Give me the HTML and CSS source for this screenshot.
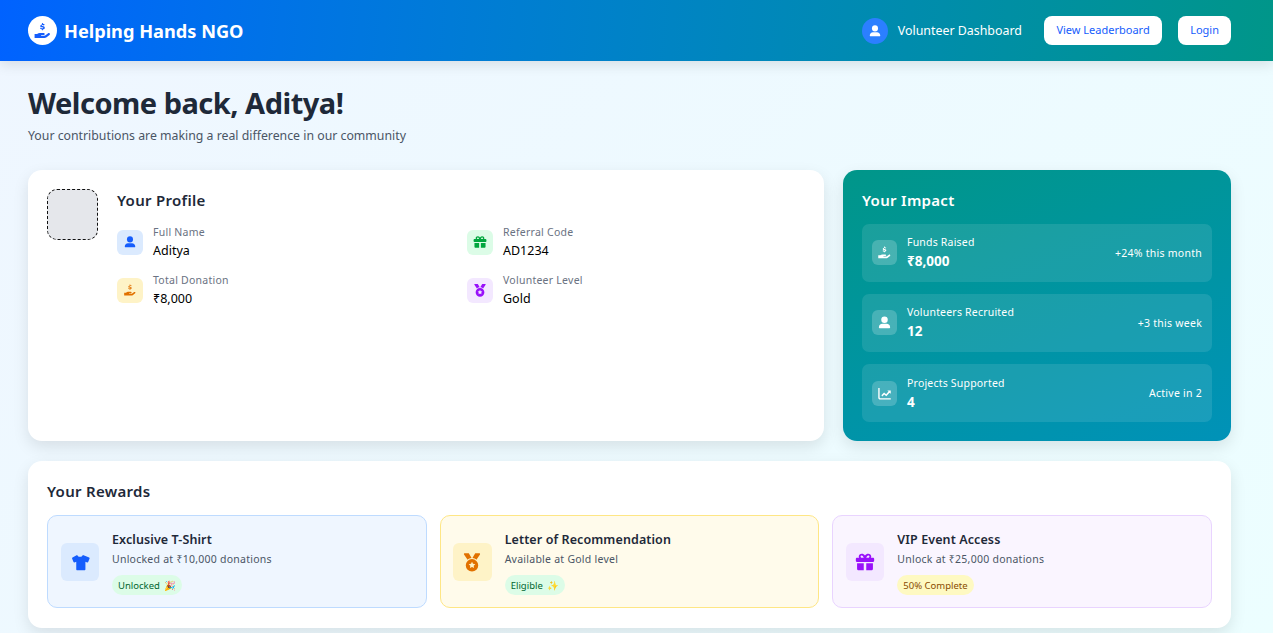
FILE: index.html
```html
<!DOCTYPE html>
<html lang="en">
<head>
    <meta charset="UTF-8">
    <meta name="viewport" content="width=device-width, initial-scale=1.0">
    <title>Helping Hands NGO</title>
    <link rel="stylesheet" href="styles.css">
</head>
<body>
    <svg class="sprite" aria-hidden="true">
        <symbol id="i-hand" viewBox="0 0 24 24">
            <path d="M2 16.500h3.200c1-.9 2.200-1.400 3.500-1.400h4.600c.9 0 1.500.6 1.500 1.300 0 .8-.6 1.300-1.500 1.300h-3v.8h4c.6 0 1.100-.2 1.500-.5l3.300-2.400c.6-.5 1.500-.4 2 .2.500.6.300 1.400-.3 1.900l-3.600 2.800c-.8.600-1.800.900-2.800.900H2z"/>
            <path d="M12.500 2.500v1c1 .1 1.800.5 2.300 1l-1 1.100c-.5-.4-1.100-.7-1.800-.7-.6 0-1 .2-1 .6 0 .4.500.6 1.300.8 1.400.3 2.600.8 2.600 2.200 0 1.200-.9 2-2.400 2.200v1h-1.200v-1c-1-.1-1.900-.5-2.500-1.100l1-1.100c.6.500 1.300.8 2 .8.700 0 1.200-.2 1.200-.7 0-.4-.5-.6-1.400-.8C10.300 8.400 9.200 7.900 9.200 6.500c0-1.100.9-1.900 2.100-2.100v-1.900z"/>
        </symbol>
        <symbol id="i-user" viewBox="0 0 24 24">
            <circle cx="12" cy="7.500" r="5.200"/>
            <path d="M8.500 14h7c3 0 5.500 2.500 5.500 5.500 0 1-.8 1.500-1.500 1.500h-15C3.800 21 3 20.500 3 19.500 3 16.500 5.500 14 8.500 14z"/>
        </symbol>
        <symbol id="i-gift" viewBox="0 0 24 24">
            <path fill-rule="evenodd" d="M8.200 2c1.500 0 2.800.8 3.800 2.300C13 2.800 14.300 2 15.800 2 17.900 2 19.500 3.500 19.500 5.300c0 .7-.2 1.200-.5 1.700h2.500c.8 0 1.500.7 1.500 1.500v2c0 .8-.7 1.500-1.500 1.500h-19C1.700 12 1 11.300 1 10.500v-2C1 7.700 1.700 7 2.500 7H5c-.3-.5-.5-1-.5-1.700C4.500 3.500 6.100 2 8.200 2zm0 2.200c-.8 0-1.500.5-1.500 1.200S7.400 7 8.200 7h2.300c-.5-1.600-1.300-2.800-2.300-2.800zm7.600 0c-1 0-1.800 1.200-2.300 2.800h2.300c.8 0 1.500-.9 1.500-1.600s-.7-1.200-1.500-1.200z"/>
            <path d="M2.500 13.500h8v8.500H4.500c-1.100 0-2-.9-2-2zM13.500 13.500h8V20c0 1.100-.9 2-2 2h-6z"/>
        </symbol>
        <symbol id="i-medal" viewBox="0 0 24 24">
            <path fill-rule="evenodd" d="M3.200 1.500h4.400c.4 0 .7.200.9.500l3 5.200c-1.900.1-3.600.9-4.800 2.100L2.400 3c-.4-.7.100-1.500.8-1.500zM20.800 1.500h-4.400c-.4 0-.7.200-.9.500l-3 5.200c1.900.1 3.600.9 4.800 2.100L21.600 3c.4-.7-.1-1.500-.8-1.500zM12 8.500a7.500 7.500 0 1 1 0 15 7.500 7.500 0 0 1 0-15zm0 3.200-1.200 2.500-2.800.4 2 1.900-.5 2.700 2.500-1.300 2.500 1.300-.5-2.700 2-1.900-2.800-.4z"/>
        </symbol>
        <symbol id="i-shirt" viewBox="0 0 24 24">
            <path d="M8.500 3.500c.8 1.500 2 2.200 3.500 2.200s2.700-.7 3.500-2.200l7.500 3c.5.200.7.700.5 1.200l-1.700 4.400c-.2.500-.7.700-1.200.5l-2.100-.8v9c0 .7-.5 1.200-1.200 1.200H8.700c-.7 0-1.200-.5-1.200-1.200v-9l-2.100.8c-.5.200-1-.1-1.200-.5L2.500 7.700c-.2-.5 0-1 .5-1.200z"/>
        </symbol>
        <symbol id="i-chart" viewBox="0 0 24 24">
            <path d="M2 3h2.200v15.300c0 .7.500 1.200 1.200 1.200H22v2.200H5c-1.700 0-3-1.300-3-3z"/>
            <path d="M7 14.800l4.300-4.500 3.300 2.700 3.800-4.200-1.900-1.800H22v5.500l-2-1.900-5.100 5.700-3.400-2.800-3 3.200z"/>
        </symbol>
    </svg>

    <header class="topbar">
        <div class="brand">
            <span class="brand-logo"><svg><use href="#i-hand"/></svg></span>
            <span class="brand-name">Helping Hands NGO</span>
        </div>
        <div class="topbar-right">
            <span class="topbar-avatar"><svg><use href="#i-user"/></svg></span>
            <span class="topbar-label">Volunteer Dashboard</span>
            <a class="btn btn-wide">View Leaderboard</a>
            <a class="btn">Login</a>
        </div>
    </header>

    <main class="page">
        <h1 class="welcome">Welcome back, Aditya!</h1>
        <p class="welcome-sub">Your contributions are making a real difference in our community</p>

        <div class="top-grid">
            <section class="card profile">
                <div class="avatar-box"></div>
                <div class="profile-body">
                    <h2 class="card-title">Your Profile</h2>
                    <div class="profile-fields">
                        <div class="field">
                            <span class="field-icon tint-blue"><svg><use href="#i-user"/></svg></span>
                            <div><div class="field-label">Full Name</div><div class="field-value">Aditya</div></div>
                        </div>
                        <div class="field">
                            <span class="field-icon tint-green"><svg><use href="#i-gift"/></svg></span>
                            <div><div class="field-label">Referral Code</div><div class="field-value">AD1234</div></div>
                        </div>
                        <div class="field">
                            <span class="field-icon tint-amber"><svg><use href="#i-hand"/></svg></span>
                            <div><div class="field-label">Total Donation</div><div class="field-value">₹8,000</div></div>
                        </div>
                        <div class="field">
                            <span class="field-icon tint-purple"><svg><use href="#i-medal"/></svg></span>
                            <div><div class="field-label">Volunteer Level</div><div class="field-value">Gold</div></div>
                        </div>
                    </div>
                </div>
            </section>

            <section class="impact">
                <h2 class="card-title impact-title">Your Impact</h2>
                <div class="stat">
                    <span class="stat-icon"><svg><use href="#i-hand"/></svg></span>
                    <div class="stat-text"><div class="stat-label">Funds Raised</div><div class="stat-value">₹8,000</div></div>
                    <span class="stat-note">+24% this month</span>
                </div>
                <div class="stat">
                    <span class="stat-icon"><svg><use href="#i-user"/></svg></span>
                    <div class="stat-text"><div class="stat-label">Volunteers Recruited</div><div class="stat-value">12</div></div>
                    <span class="stat-note">+3 this week</span>
                </div>
                <div class="stat">
                    <span class="stat-icon"><svg><use href="#i-chart"/></svg></span>
                    <div class="stat-text"><div class="stat-label">Projects Supported</div><div class="stat-value">4</div></div>
                    <span class="stat-note">Active in 2</span>
                </div>
            </section>
        </div>

        <section class="card rewards">
            <h2 class="card-title">Your Rewards</h2>
            <div class="reward-grid">
                <div class="reward reward-blue">
                    <span class="reward-icon tint-blue"><svg><use href="#i-shirt"/></svg></span>
                    <div class="reward-text">
                        <h3 class="reward-name">Exclusive T-Shirt</h3>
                        <p class="reward-desc">Unlocked at ₹10,000 donations</p>
                        <span class="pill pill-green">Unlocked <span class="pill-emoji">🎉</span></span>
                    </div>
                </div>
                <div class="reward reward-amber">
                    <span class="reward-icon tint-amber"><svg><use href="#i-medal"/></svg></span>
                    <div class="reward-text">
                        <h3 class="reward-name">Letter of Recommendation</h3>
                        <p class="reward-desc">Available at Gold level</p>
                        <span class="pill pill-green">Eligible <span class="pill-emoji">✨</span></span>
                    </div>
                </div>
                <div class="reward reward-purple">
                    <span class="reward-icon tint-purple"><svg><use href="#i-gift"/></svg></span>
                    <div class="reward-text">
                        <h3 class="reward-name">VIP Event Access</h3>
                        <p class="reward-desc">Unlock at ₹25,000 donations</p>
                        <span class="pill pill-yellow">50% Complete</span>
                    </div>
                </div>
            </div>
        </section>
    </main>
</body>
</html>
```

FILE: styles.css
```css
* {
    box-sizing: border-box;
}
html, body {
    margin: 0;
    height: 633px;
    overflow: hidden;
}
body {
    font-family: "Noto Sans", "Open Sans", sans-serif;
    color: #1e2939;
    background: linear-gradient(135deg, #eff6ff, #ecfeff);
}
h1, h2, h3, p {
    margin: 0;
}
svg {
    display: block;
    fill: currentColor;
}
.sprite {
    display: none;
}

/* header */
.topbar {
    height: 61px;
    padding: 0 42px 0 28px;
    display: flex;
    align-items: center;
    justify-content: space-between;
    background: linear-gradient(95deg in oklab, #0062ff, #009689);
    box-shadow: 0 4px 12px rgba(0, 0, 0, 0.1);
    color: #fff;
}
.brand {
    display: flex;
    align-items: center;
    gap: 7px;
}
.brand-logo {
    width: 29px;
    height: 29px;
    border-radius: 50%;
    background: #fff;
    color: #155dfc;
    display: flex;
    align-items: center;
    justify-content: center;
}
.brand-logo svg {
    width: 19px;
    height: 19px;
}
.brand-name {
    font-size: 18.2px;
    font-weight: 700;
}
.topbar-right {
    display: flex;
    align-items: center;
}
.topbar-avatar {
    width: 26px;
    height: 26px;
    border-radius: 50%;
    background: #2b7fff;
    display: flex;
    align-items: center;
    justify-content: center;
    margin-right: 10px;
}
.topbar-avatar svg {
    width: 14px;
    height: 14px;
}
.topbar-label {
    font-size: 12.4px;
    margin-right: 22px;
}
.btn {
    height: 29px;
    padding: 0 12px 2px;
    border-radius: 8px;
    background: #fff;
    color: #155dfc;
    font-size: 11px;
    display: flex;
    align-items: center;
}
.btn-wide {
    padding: 0 12.5px 2px;
    margin-right: 16px;
}

/* page */
.page {
    padding: 23px 42px 0 28px;
}
.welcome {
    font-size: 29px;
    line-height: 38px;
    font-weight: 700;
    letter-spacing: -0.5px;
}
.welcome-sub {
    margin-top: 5px;
    font-size: 12.3px;
    line-height: 18px;
    color: #4a5565;
}
.top-grid {
    margin-top: 25px;
    display: grid;
    grid-template-columns: minmax(0, 1fr) 388px;
    gap: 19px;
}
.card {
    background: #fff;
    border-radius: 14px;
    box-shadow: 0 6px 16px rgba(0, 0, 0, 0.1);
}
.card-title {
    font-size: 15px;
    line-height: 22px;
    font-weight: 600;
    letter-spacing: 0.3px;
}

/* profile */
.profile {
    height: 271px;
    padding: 19px;
    display: flex;
    gap: 19px;
    align-items: flex-start;
}
.avatar-box {
    width: 51px;
    height: 51px;
    flex: none;
    border-radius: 10px;
    border: 1px dashed #111;
    background: #e5e7eb;
}
.profile-body {
    flex: 1;
}
.profile-fields {
    margin-top: 13px;
    display: grid;
    grid-template-columns: 350px 1fr;
    row-gap: 12px;
}
.field {
    display: flex;
    align-items: center;
    gap: 10px;
}
.field-icon {
    width: 26px;
    height: 25px;
    border-radius: 6px;
    display: flex;
    align-items: center;
    justify-content: center;
}
.field-icon svg {
    width: 14px;
    height: 14px;
}
.field-label {
    font-size: 10.5px;
    line-height: 16px;
    letter-spacing: 0.25px;
    color: #6a7282;
}
.field-value {
    margin-top: 2px;
    font-size: 12.5px;
    line-height: 18px;
    color: #000;
}
.tint-blue {
    background: #dbeafe;
    color: #155dfc;
}
.tint-green {
    background: #dcfce7;
    color: #00a63e;
}
.tint-amber {
    background: #fef3c7;
    color: #e17100;
}
.tint-purple {
    background: #f3e8ff;
    color: #9810fa;
}

/* impact */
.impact {
    height: 271px;
    padding: 19px;
    border-radius: 14px;
    color: #fff;
    background: linear-gradient(160deg in oklab, #009689, #0092b8);
    box-shadow: 0 6px 16px rgba(0, 0, 0, 0.1);
}
.impact-title {
    margin-bottom: 13px;
}
.stat {
    height: 57.6px;
    margin-bottom: 12.6px;
    padding: 0 10px;
    border-radius: 7px;
    background: rgba(255, 255, 255, 0.1);
    display: flex;
    align-items: center;
    gap: 10px;
}
.stat-icon {
    width: 25px;
    height: 25px;
    flex: none;
    border-radius: 6px;
    background: rgba(255, 255, 255, 0.2);
    display: flex;
    align-items: center;
    justify-content: center;
}
.stat-icon svg {
    width: 15px;
    height: 15px;
}
.stat-text {
    flex: 1;
}
.stat-label {
    font-size: 10.5px;
    line-height: 16px;
    letter-spacing: 0.2px;
}
.stat-value {
    margin-top: 1px;
    font-size: 13.5px;
    line-height: 20px;
    font-weight: 700;
}
.stat-note {
    font-size: 10.5px;
    letter-spacing: 0.25px;
}

/* rewards */
.rewards {
    margin-top: 20px;
    height: 167px;
    padding: 19px;
}
.reward-grid {
    margin-top: 13px;
    display: grid;
    grid-template-columns: repeat(3, 1fr);
    gap: 13px;
}
.reward {
    height: 93px;
    padding: 0 12.5px;
    border-radius: 10px;
    border: 1px solid;
    display: flex;
    align-items: center;
    gap: 13px;
}
.reward-blue {
    background: #eff6ff;
    border-color: #bedbff;
}
.reward-amber {
    background: #fffbeb;
    border-color: #fee685;
}
.reward-purple {
    background: #faf5ff;
    border-color: #e9d4ff;
}
.reward-icon {
    width: 38.5px;
    height: 38px;
    flex: none;
    border-radius: 6px;
    display: flex;
    align-items: center;
    justify-content: center;
}
.reward-icon svg {
    width: 20px;
    height: 20px;
}
.reward-text {
    padding-top: 3px;
}
.reward-name {
    font-size: 12.5px;
    line-height: 18px;
    font-weight: 600;
    letter-spacing: 0.1px;
}
.reward-desc {
    margin-top: 2px;
    font-size: 10.5px;
    line-height: 16px;
    letter-spacing: 0.25px;
    color: #4a5565;
}
.pill {
    display: inline-block;
    margin-top: 8px;
    padding: 0 6px;
    height: 20px;
    line-height: 21px;
    border-radius: 10px;
    font-size: 9.5px;
}
.pill-emoji {
    margin-left: 2px;
}
.pill-green {
    background: #dcfce7;
    color: #016630;
}
.pill-yellow {
    background: #fef9c2;
    color: #894b00;
}
```
